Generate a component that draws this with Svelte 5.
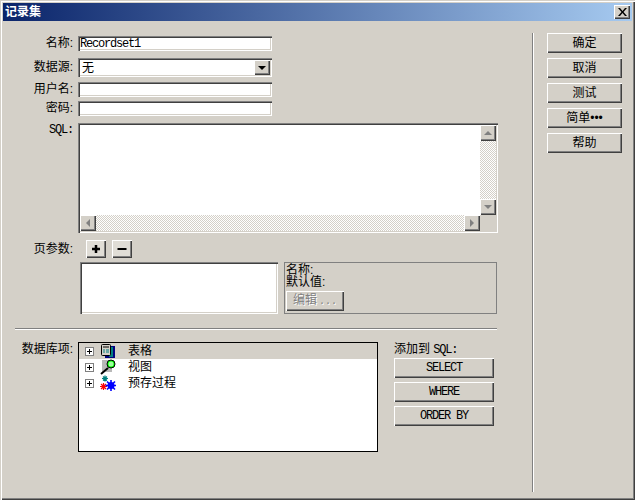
<script lang="ts">
  const actions = ['确定', '取消', '测试', '简单•••', '帮助'];
  const sqlButtons = ['SELECT', 'WHERE', 'ORDER BY'];
</script>

{#snippet plusBox()}
  <svg class="expander" width="9" height="9" viewBox="0 0 9 9">
    <rect x="0.5" y="0.5" width="8" height="8" fill="#fff" stroke="#808080" />
    <path d="M2 4.5h5M4.5 2v5" stroke="#000" />
  </svg>
{/snippet}

<div class="window">
  <header class="title">
    <span>记录集</span>
    <button class="close" aria-label="关闭">
      <svg width="9" height="8" viewBox="0 0 9 8"><path d="M0 0h2l2.500 3L7 0h2L5.500 4 9 8H7L4.500 5 2 8H0l3.500-4z" fill="#000" /></svg>
    </button>
  </header>

  <div class="body">
    <main class="form">
      <div class="row">
        <label for="name">名称:</label>
        <input id="name" class="sunken text mono" value="Recordset1" />
      </div>
      <div class="row source">
        <span class="label">数据源:</span>
        <div class="sunken select">
          <span>无</span>
          <span class="drop raised"><i></i></span>
        </div>
      </div>
      <div class="row user">
        <label for="user">用户名:</label>
        <input id="user" class="sunken text" />
      </div>
      <div class="row pass">
        <label for="pass">密码:</label>
        <input id="pass" class="sunken text" />
      </div>
      <div class="row sql-row">
        <span class="label mono">SQL:</span>
        <div class="sunken sql">
          <div class="sql-main">
            <div class="sql-text"></div>
            <div class="vbar dither">
              <span class="arrow raised"><i class="up"></i></span>
              <span class="arrow raised"><i class="down"></i></span>
            </div>
          </div>
          <div class="hbar">
            <div class="hbar-track dither">
              <span class="arrow raised"><i class="left"></i></span>
              <span class="arrow raised"><i class="right"></i></span>
            </div>
            <span class="corner"></span>
          </div>
        </div>
      </div>

      <div class="params-head">
        <span class="label">页参数:</span>
        <button class="raised tool first" aria-label="添加">
          <svg width="12" height="12" viewBox="0 0 12 12"><path d="M2 6h8M6 2v8" stroke="#000" stroke-width="2.500" /></svg>
        </button>
        <button class="raised tool" aria-label="删除">
          <svg width="12" height="12" viewBox="0 0 12 12"><path d="M1.500 6h9" stroke="#000" stroke-width="2" /></svg>
        </button>
      </div>

      <div class="params">
        <div class="sunken param-list"></div>
        <div class="param-detail">
          <div class="detail-text">名称:</div>
          <div class="detail-text">默认值:</div>
          <button class="raised edit">编辑<span class="dots">...</span></button>
        </div>
      </div>

      <div class="divider"></div>

      <div class="db">
        <span class="label">数据库项:</span>
        <div class="tree">
          <div class="node selected">
            {@render plusBox()}
            <svg class="icon" width="16" height="16" viewBox="0 0 16 16">
              <rect x="5" y="3" width="10" height="12" fill="#000080" />
              <rect x="9" y="4" width="4" height="10" fill="#008080" />
              <rect x="1.500" y="1.500" width="9" height="11" rx="1" fill="#d4d0c8" stroke="#000" />
              <path d="M3 4h6" stroke="#000" />
              <path d="M3 7h2M6 7h3M3 9h2M6 9h3" stroke="#008080" />
            </svg>
            <span class="node-text">表格</span>
          </div>
          <div class="node">
            {@render plusBox()}
            <svg class="icon" width="16" height="16" viewBox="0 0 16 16">
              <rect x="2" y="1" width="10" height="12" fill="#b8b8b8" />
              <path d="M1 15l7-6" stroke="#000" stroke-width="2" />
              <circle cx="11" cy="5" r="4" fill="#00ff00" stroke="#000" />
              <circle cx="11" cy="5" r="2.500" fill="#a0ffa0" />
            </svg>
            <span class="node-text">视图</span>
          </div>
          <div class="node">
            {@render plusBox()}
            <svg class="icon" width="16" height="16" viewBox="0 0 16 16">
              <path d="M5 0.500v6M2 3.500h6M3 1.500l4 4M7 1.500l-4 4" stroke="#008080" stroke-width="1.200" />
              <path d="M3.500 8v7M0 11.500h7M1 9l5 5M6 9l-5 5" stroke="#ff0000" stroke-width="1.200" />
              <circle cx="11" cy="10.500" r="3.500" fill="#0000ff" />
              <path d="M11 5v11M5.500 10.500h11M7 6.500l8 8M15 6.500l-8 8" stroke="#0000ff" stroke-width="1.600" />
            </svg>
            <span class="node-text">预存过程</span>
          </div>
        </div>
        <div class="add-sql">
          <div class="add-label">添加到 <span class="mono">SQL:</span></div>
          {#each sqlButtons as b}
            <button class="raised mono sql-btn">{b}</button>
          {/each}
        </div>
      </div>
    </main>

    <aside class="actions">
      {#each actions as a}
        <button class="raised action">{a}</button>
      {/each}
    </aside>
  </div>
</div>

<style>
  :global(body) {
    margin: 0;
    background: #d4d0c8;
  }

  .window {
    box-sizing: border-box;
    width: 635px;
    height: 500px;
    padding: 3px;
    background: #d4d0c8;
    box-shadow: inset 1px 1px 0 #d4d0c8, inset 2px 2px 0 #fff, inset -1px -1px 0 #404040, inset -2px -2px 0 #808080;
    font: 12px/14px "Liberation Sans", "Noto Sans CJK SC", sans-serif;
    color: #000;
    overflow: hidden;
  }

  button,
  input {
    margin: 0;
    padding: 0;
    border: 0;
    font: inherit;
    color: inherit;
    background: #d4d0c8;
    outline: none;
    box-sizing: border-box;
  }

  .mono {
    font-family: "Liberation Mono", monospace;
    font-size: 12px;
    letter-spacing: -1.2px;
  }

  .raised {
    background: #d4d0c8;
    box-shadow: inset 1px 1px 0 #fff, inset -1px -1px 0 #404040, inset -2px -2px 0 #808080;
  }

  .sunken {
    box-sizing: border-box;
    background: #fff;
    box-shadow: inset 1px 1px 0 #808080, inset 2px 2px 0 #404040, inset -1px -1px 0 #fff, inset -2px -2px 0 #d4d0c8;
  }

  .dither {
    background-color: #fff;
    background-image: conic-gradient(#d4d0c8 25%, #fff 0 50%, #d4d0c8 0 75%, #fff 0);
    background-size: 2px 2px;
  }

  .title {
    height: 18px;
    display: flex;
    align-items: center;
    justify-content: space-between;
    padding: 0 2px 0 2px;
    background: linear-gradient(to right, #0a246a, #a6caf0);
    color: #fff;
    font-weight: 700;
  }

  .close {
    width: 16px;
    height: 14px;
    display: flex;
    align-items: center;
    justify-content: center;
    background: #d4d0c8;
    box-shadow: inset 1px 1px 0 #fff, inset -1px -1px 0 #404040, inset -2px -2px 0 #808080;
  }

  .body {
    display: flex;
    height: 476px;
  }

  .form {
    width: 529px;
    flex: none;
    padding: 15px 0 0 12px;
    box-sizing: border-box;
  }

  .row {
    display: flex;
    align-items: flex-start;
  }

  .row label,
  .label {
    flex: none;
    width: 63px;
    padding-right: 5px;
    box-sizing: border-box;
    text-align: right;
    white-space: nowrap;
  }

  .row.source {
    margin-top: 7px;
  }

  .row.source .label {
    padding-top: 2px;
  }

  .row.user {
    margin-top: 5px;
  }

  .row.pass {
    margin-top: 4px;
  }

  .row.sql-row {
    margin-top: 7px;
  }

  .text {
    width: 194px;
    height: 15px;
    padding: 0 2px;
  }

  .select {
    width: 194px;
    height: 19px;
    display: flex;
    align-items: center;
    justify-content: space-between;
    padding: 2px 2px 2px 4px;
  }

  .drop {
    width: 16px;
    height: 15px;
    display: flex;
    align-items: center;
    justify-content: center;
  }

  .drop i {
    width: 0;
    height: 0;
    border: 4px solid transparent;
    border-top-color: #000;
    border-bottom: 0;
  }

  .sql {
    width: 420px;
    height: 110px;
    padding: 2px;
    display: flex;
    flex-direction: column;
  }

  .sql-main {
    display: flex;
    flex: 1;
    min-height: 0;
  }

  .sql-text {
    flex: 1;
    background: #fff;
  }

  .vbar {
    width: 16px;
    display: flex;
    flex-direction: column;
    justify-content: space-between;
  }

  .arrow {
    width: 16px;
    height: 16px;
    display: flex;
    align-items: center;
    justify-content: center;
    flex: none;
  }

  .arrow i {
    width: 0;
    height: 0;
    border: 4px solid transparent;
  }

  .arrow .up {
    border-top: 0;
    border-bottom-color: #808080;
  }

  .arrow .down {
    border-bottom: 0;
    border-top-color: #808080;
  }

  .arrow .left {
    border-left: 0;
    border-right-color: #808080;
  }

  .arrow .right {
    border-right: 0;
    border-left-color: #808080;
  }

  .hbar {
    display: flex;
    height: 16px;
  }

  .hbar-track {
    flex: 1;
    display: flex;
    justify-content: space-between;
  }

  .corner {
    width: 16px;
    background: #d4d0c8;
  }

  .params-head {
    display: flex;
    align-items: center;
    margin-top: 7px;
    height: 18px;
  }

  .tool {
    width: 20px;
    height: 18px;
    margin-right: 6px;
    display: flex;
    align-items: center;
    justify-content: center;
    background: #e0ddd6;
  }

  .tool.first {
    margin-left: 8px;
  }

  .params {
    display: flex;
    gap: 6px;
    margin: 4px 0 0 65px;
    height: 52px;
  }

  .param-list {
    width: 198px;
  }

  .param-detail {
    width: 213px;
    box-sizing: border-box;
    border: 1px solid #808080;
    padding: 1px 1px 0;
  }

  .detail-text {
    height: 12px;
    line-height: 12px;
  }

  .edit {
    display: block;
    width: 58px;
    height: 20px;
    margin-top: 3px;
    color: #808080;
    text-shadow: 1px 1px 0 #fff;
  }

  .dots {
    font-family: "Liberation Mono", monospace;
    font-size: 10px;
    margin-left: 2px;
  }

  .divider {
    height: 2px;
    margin-top: 14px;
    width: 482px;
    background: linear-gradient(#808080 50%, #fff 50%);
  }

  .db {
    display: flex;
    margin-top: 12px;
  }

  .tree {
    width: 300px;
    height: 110px;
    box-sizing: border-box;
    border: 1px solid #000;
    background: #fff;
  }

  .node {
    display: flex;
    align-items: center;
    height: 16px;
    padding-left: 6px;
  }

  .selected {
    background: #d4d0c8;
  }

  .expander {
    flex: none;
  }

  .icon {
    margin-left: 6px;
    flex: none;
  }

  .node-text {
    margin-left: 12px;
  }

  .add-sql {
    margin-left: 16px;
    display: flex;
    flex-direction: column;
    gap: 4px;
    width: 100px;
  }

  .add-label {
    height: 12px;
    white-space: nowrap;
  }

  .sql-btn {
    height: 20px;
    width: 100px;
  }

  .actions {
    box-sizing: border-box;
    width: 97px;
    margin-top: 12px;
    height: 459px;
    padding-left: 14px;
    display: flex;
    flex-direction: column;
    gap: 5px;
    border-left: 1px solid #808080;
    box-shadow: inset 1px 0 0 #fff;
  }

  .action {
    width: 75px;
    height: 20px;
    flex: none;
  }
</style>
